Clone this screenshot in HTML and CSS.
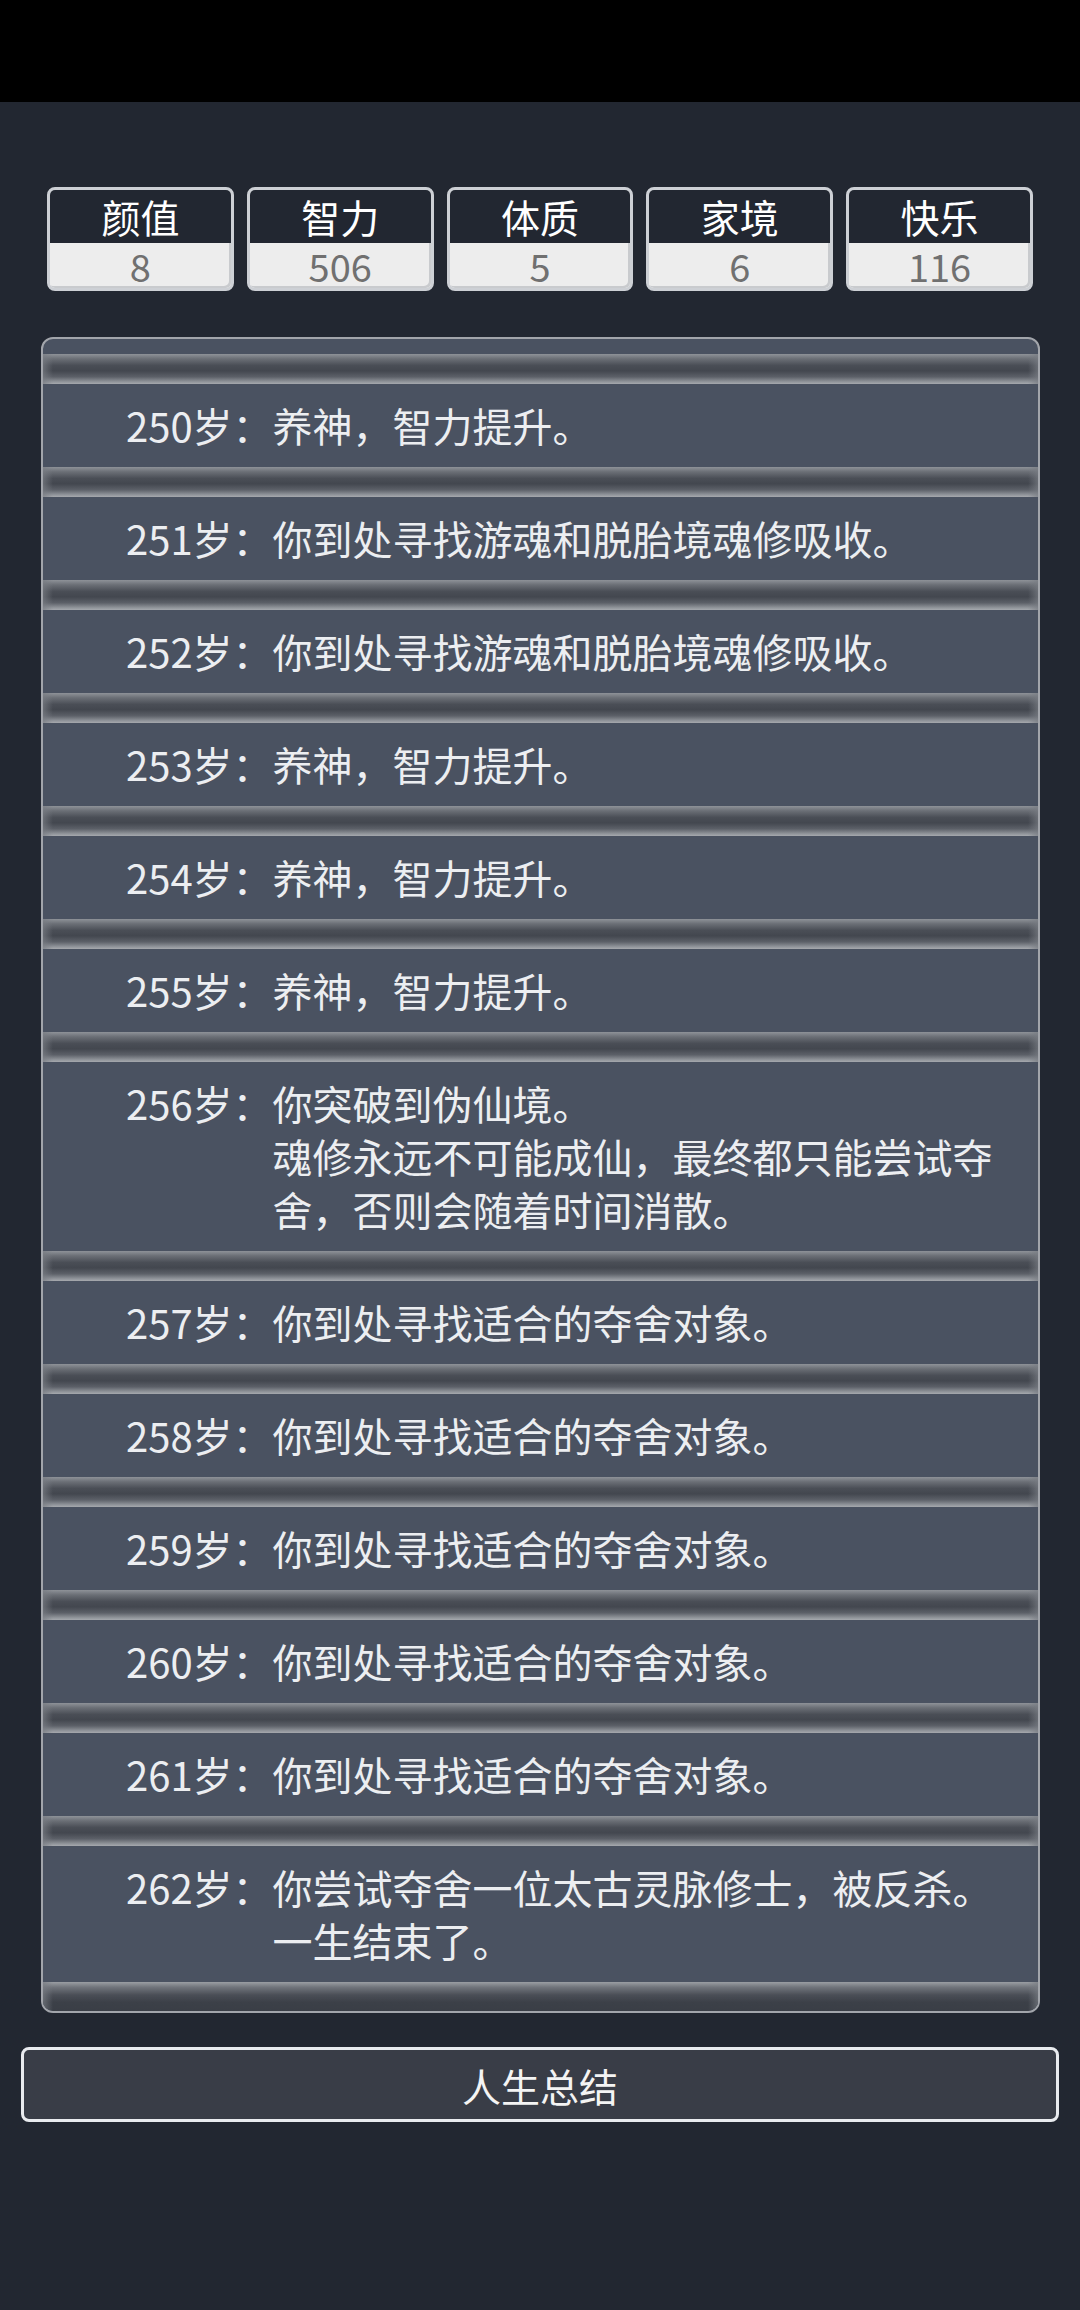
FILE: index.html
```html
<!doctype html>
<html>
	<head>
		<meta charset="UTF-8">
		<title>人生重开</title>
		<link rel="stylesheet" href="styles.css">
	</head>
	<body>
		<div class="statusbar"></div>
		<div class="page">
			<div class="stats">
				<div class="stat"><div class="stat-name">颜值</div><div class="stat-value">8</div></div>
				<div class="stat"><div class="stat-name">智力</div><div class="stat-value">506</div></div>
				<div class="stat"><div class="stat-name">体质</div><div class="stat-value">5</div></div>
				<div class="stat"><div class="stat-name">家境</div><div class="stat-value">6</div></div>
				<div class="stat"><div class="stat-name">快乐</div><div class="stat-value">116</div></div>
			</div>

			<div class="log">
				<ul class="events">
					<li class="event"><span class="age">250岁：</span><span class="desc">养神，智力提升。</span></li>
					<li class="event"><span class="age">251岁：</span><span class="desc">你到处寻找游魂和脱胎境魂修吸收。</span></li>
					<li class="event"><span class="age">252岁：</span><span class="desc">你到处寻找游魂和脱胎境魂修吸收。</span></li>
					<li class="event"><span class="age">253岁：</span><span class="desc">养神，智力提升。</span></li>
					<li class="event"><span class="age">254岁：</span><span class="desc">养神，智力提升。</span></li>
					<li class="event"><span class="age">255岁：</span><span class="desc">养神，智力提升。</span></li>
					<li class="event"><span class="age">256岁：</span><span class="desc">你突破到伪仙境。<br>魂修永远不可能成仙，最终都只能尝试夺舍，否则会随着时间消散。</span></li>
					<li class="event"><span class="age">257岁：</span><span class="desc">你到处寻找适合的夺舍对象。</span></li>
					<li class="event"><span class="age">258岁：</span><span class="desc">你到处寻找适合的夺舍对象。</span></li>
					<li class="event"><span class="age">259岁：</span><span class="desc">你到处寻找适合的夺舍对象。</span></li>
					<li class="event"><span class="age">260岁：</span><span class="desc">你到处寻找适合的夺舍对象。</span></li>
					<li class="event"><span class="age">261岁：</span><span class="desc">你到处寻找适合的夺舍对象。</span></li>
					<li class="event"><span class="age">262岁：</span><span class="desc">你尝试夺舍一位太古灵脉修士，被反杀。<br>一生结束了。</span></li>
				</ul>
				<div class="log-end"></div>
			</div>

			<button class="summary">人生总结</button>
		</div>
	</body>
</html>
```

FILE: styles.css
```css
body{
	margin:0;
	background-color:#222731;
	font-family:"Noto Sans CJK SC","Noto Sans",sans-serif;
}
.statusbar{height:102px;background:#000}
.page{padding-bottom:40px}

/* attribute cards */
.stats{display:flex;gap:13px;margin:85px 47px 0}
.stat{
	flex:1;
	border:3px solid #cdd0d5;
	border-radius:8px;
	background:#ececec;
}
.stat-name{
	height:53px;
	line-height:53px;
	text-align:center;
	font-size:39px;
	color:#fff;
	background:#222731;
	border-radius:5px 5px 0 0;
}
.stat-value{
	height:45px;
	line-height:45px;
	text-align:center;
	font-size:38px;
	color:#707070;
	background:#ededed;
	border-radius:0 0 5px 5px;
	box-shadow:inset -2px -2px 0 #c9cbce;
}

/* life log */
.log{
	margin:46px 40px 0 41px;
	border:2px solid #a2a5ab;
	border-radius:12px;
	background:#4a5261;
	padding-top:15px;
	overflow:hidden;
}
.events{list-style:none;margin:0;padding:0}
.event{
	display:flex;
	padding:45px 20px 15px 83px;
	font-size:40px;
	line-height:53px;
	color:#eceef1;
	background:
		linear-gradient(to right,rgba(120,124,131,.7),rgba(120,124,131,0) 10px,rgba(120,124,131,0) calc(100% - 10px),rgba(120,124,131,.7)) top/100% 30px no-repeat,
		linear-gradient(#8e9298 0,#6b6f76 16%,#4a4e56 38%,#43474f 56%,#5c6068 76%,#8f9399 92%,#a6a9ae 100%) top/100% 30px no-repeat,
		#4a5261;
}
.age{white-space:nowrap}
.desc{flex:1}
.log-end{
	height:29px;
	background:
		linear-gradient(to right,rgba(120,124,131,.7),rgba(120,124,131,0) 10px,rgba(120,124,131,0) calc(100% - 10px),rgba(120,124,131,.7)),
		linear-gradient(#9a9ea3 0,#70747b 18%,#4a4e56 45%,#3c4048 70%,#3a3e46 100%);
}

/* bottom button */
.summary{
	display:block;
	box-sizing:border-box;
	width:1038px;
	height:75px;
	margin:34px 21px 0;
	border:3px solid #e9ebef;
	border-radius:8px;
	background:#393d47;
	color:#f4f4f4;
	font-family:inherit;
	font-size:39px;
	padding:0;
}
```
